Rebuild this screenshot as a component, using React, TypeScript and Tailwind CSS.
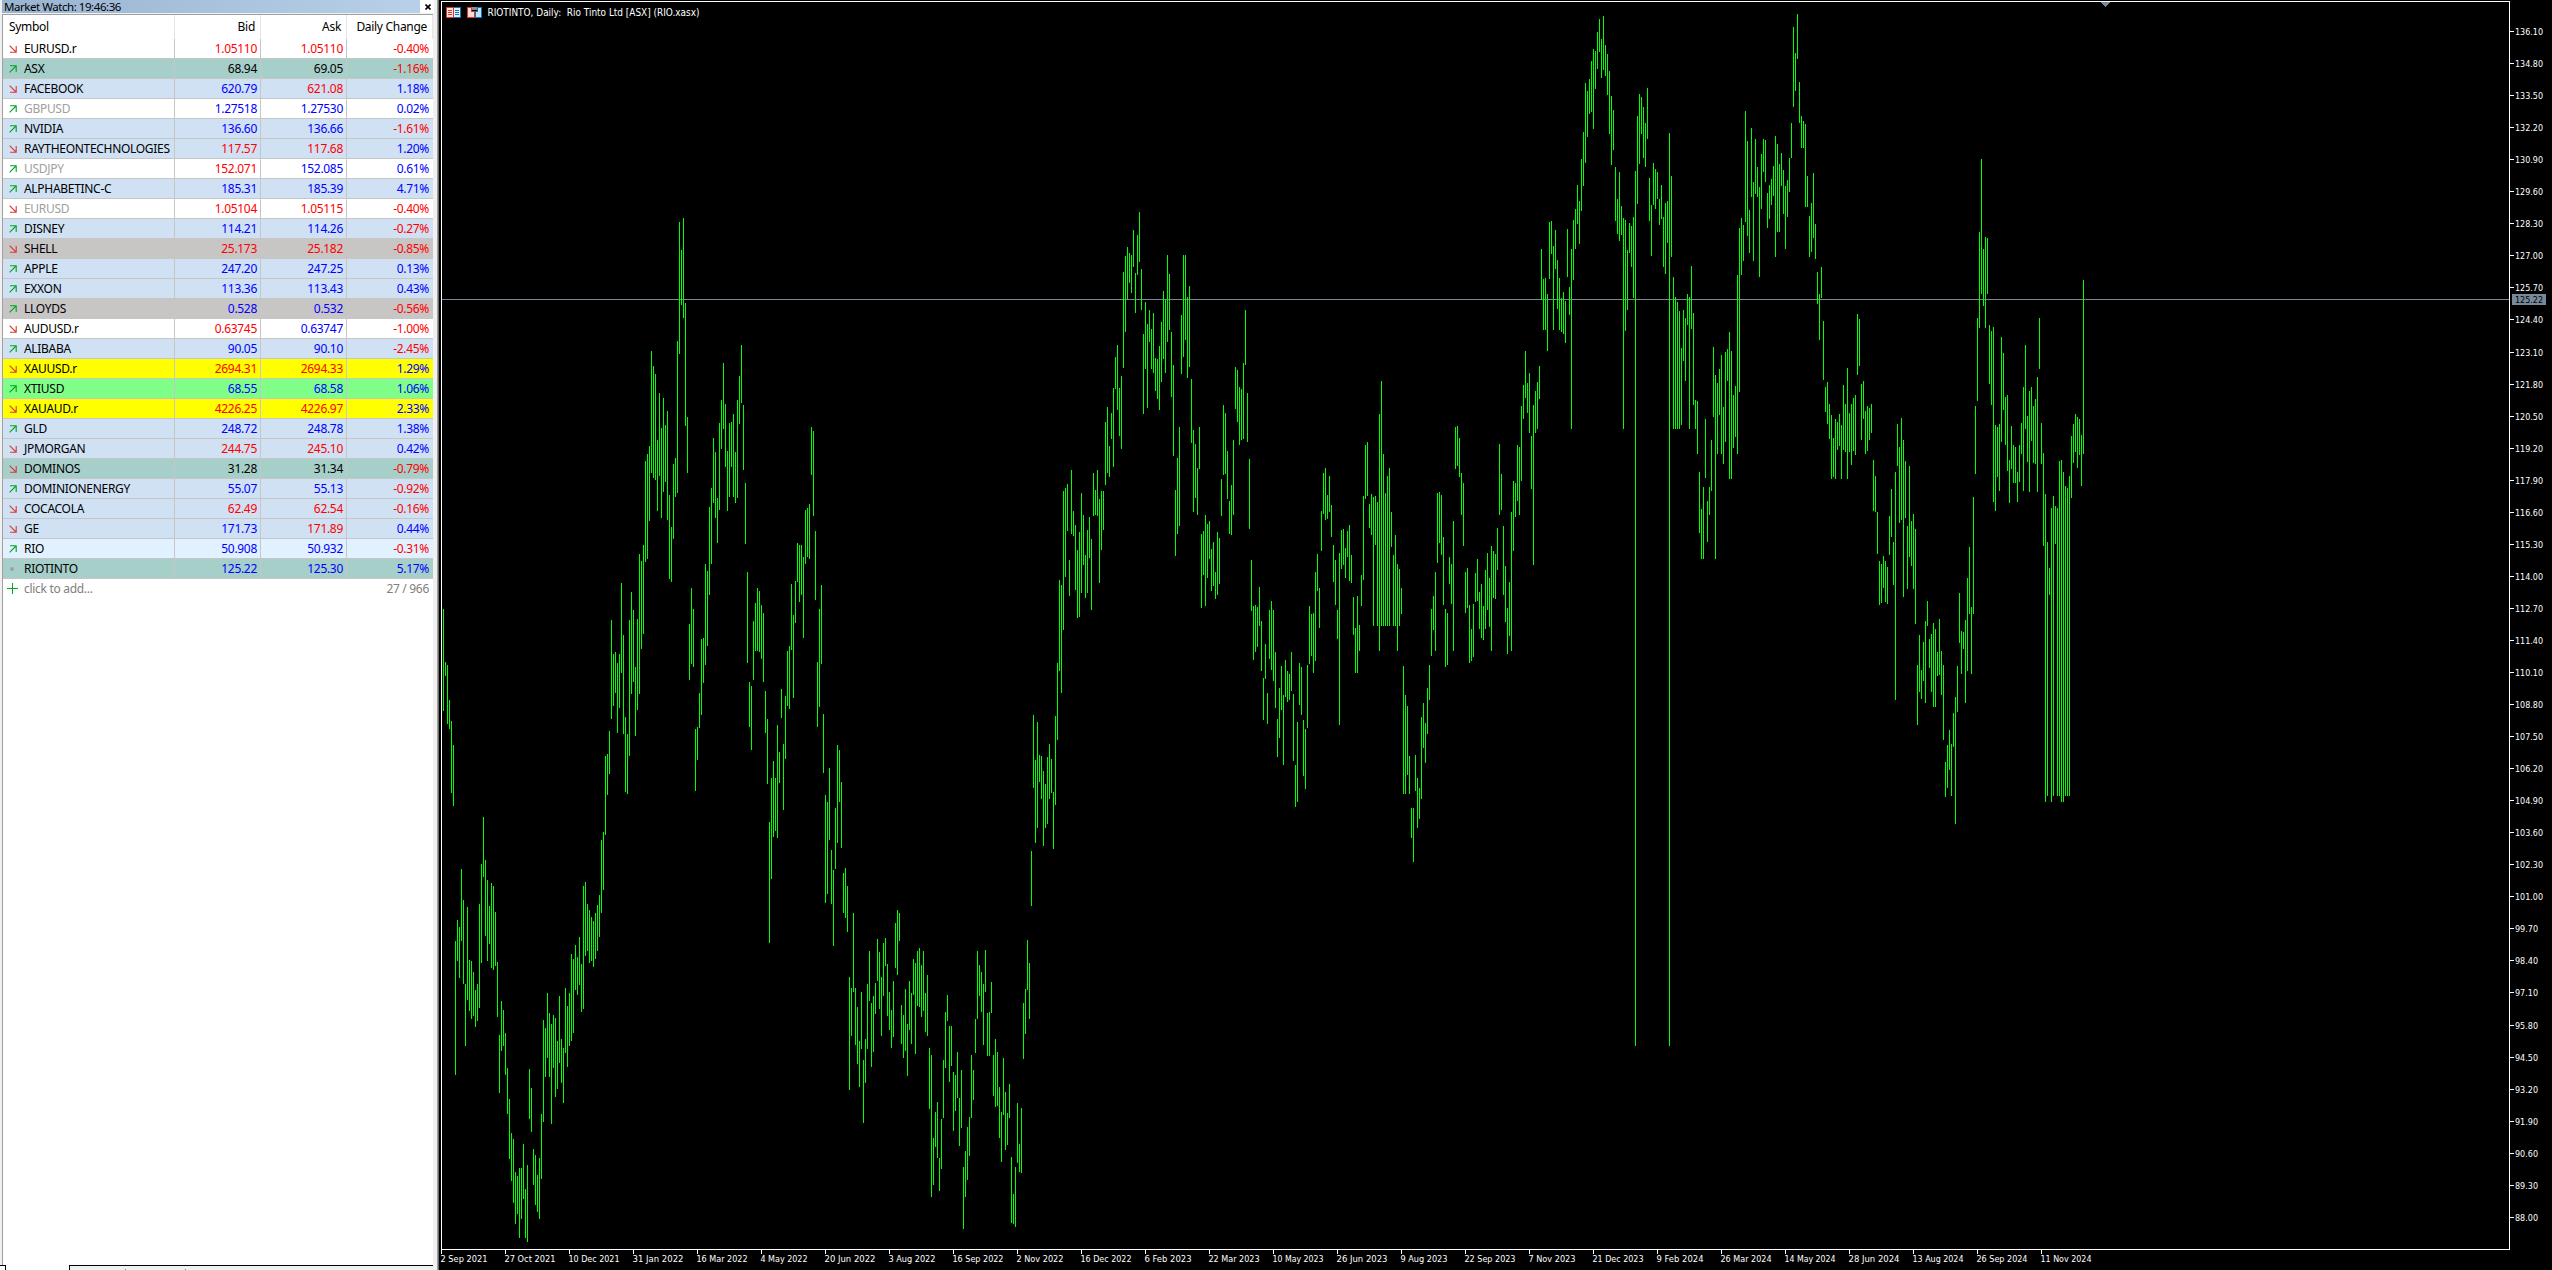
type Quote = {
  symbol: string
  dir: 'up' | 'down' | 'none'
  bid: string
  ask: string
  change: string
  bg: string
  bidColor?: string
  askColor?: string
  muted?: boolean
}

const BLUE = 'text-[#0000ff]'
const RED = 'text-[#ff0000]'
const BLACK = 'text-black'

const SKY = 'bg-[#cfe1f3]'
const TEAL = 'bg-[#a6cfc9]'
const GREY = 'bg-[#c8c5c5]'
const WHITE = 'bg-white'
const YELLOW = 'bg-[#ffff00]'

const QUOTES: Quote[] = [
  { symbol: 'EURUSD.r', dir: 'down', bid: '1.05110', ask: '1.05110', change: '-0.40%', bg: WHITE, bidColor: RED, askColor: RED },
  { symbol: 'ASX', dir: 'up', bid: '68.94', ask: '69.05', change: '-1.16%', bg: TEAL, bidColor: BLACK, askColor: BLACK },
  { symbol: 'FACEBOOK', dir: 'down', bid: '620.79', ask: '621.08', change: '1.18%', bg: SKY, askColor: RED },
  { symbol: 'GBPUSD', dir: 'up', bid: '1.27518', ask: '1.27530', change: '0.02%', bg: WHITE, muted: true },
  { symbol: 'NVIDIA', dir: 'up', bid: '136.60', ask: '136.66', change: '-1.61%', bg: SKY },
  { symbol: 'RAYTHEONTECHNOLOGIES', dir: 'down', bid: '117.57', ask: '117.68', change: '1.20%', bg: SKY, bidColor: RED, askColor: RED },
  { symbol: 'USDJPY', dir: 'up', bid: '152.071', ask: '152.085', change: '0.61%', bg: WHITE, bidColor: RED, muted: true },
  { symbol: 'ALPHABETINC-C', dir: 'up', bid: '185.31', ask: '185.39', change: '4.71%', bg: SKY },
  { symbol: 'EURUSD', dir: 'down', bid: '1.05104', ask: '1.05115', change: '-0.40%', bg: WHITE, bidColor: RED, askColor: RED, muted: true },
  { symbol: 'DISNEY', dir: 'up', bid: '114.21', ask: '114.26', change: '-0.27%', bg: SKY },
  { symbol: 'SHELL', dir: 'down', bid: '25.173', ask: '25.182', change: '-0.85%', bg: GREY, bidColor: RED, askColor: RED },
  { symbol: 'APPLE', dir: 'up', bid: '247.20', ask: '247.25', change: '0.13%', bg: SKY },
  { symbol: 'EXXON', dir: 'up', bid: '113.36', ask: '113.43', change: '0.43%', bg: SKY },
  { symbol: 'LLOYDS', dir: 'up', bid: '0.528', ask: '0.532', change: '-0.56%', bg: GREY },
  { symbol: 'AUDUSD.r', dir: 'down', bid: '0.63745', ask: '0.63747', change: '-1.00%', bg: WHITE, bidColor: RED },
  { symbol: 'ALIBABA', dir: 'up', bid: '90.05', ask: '90.10', change: '-2.45%', bg: SKY },
  { symbol: 'XAUUSD.r', dir: 'down', bid: '2694.31', ask: '2694.33', change: '1.29%', bg: YELLOW, bidColor: RED, askColor: RED },
  { symbol: 'XTIUSD', dir: 'up', bid: '68.55', ask: '68.58', change: '1.06%', bg: 'bg-[#7fff87]' },
  { symbol: 'XAUAUD.r', dir: 'down', bid: '4226.25', ask: '4226.97', change: '2.33%', bg: YELLOW, bidColor: RED, askColor: RED },
  { symbol: 'GLD', dir: 'up', bid: '248.72', ask: '248.78', change: '1.38%', bg: SKY },
  { symbol: 'JPMORGAN', dir: 'down', bid: '244.75', ask: '245.10', change: '0.42%', bg: SKY, bidColor: RED, askColor: RED },
  { symbol: 'DOMINOS', dir: 'down', bid: '31.28', ask: '31.34', change: '-0.79%', bg: TEAL, bidColor: BLACK, askColor: BLACK },
  { symbol: 'DOMINIONENERGY', dir: 'up', bid: '55.07', ask: '55.13', change: '-0.92%', bg: SKY },
  { symbol: 'COCACOLA', dir: 'down', bid: '62.49', ask: '62.54', change: '-0.16%', bg: SKY, bidColor: RED, askColor: RED },
  { symbol: 'GE', dir: 'down', bid: '171.73', ask: '171.89', change: '0.44%', bg: SKY, askColor: RED },
  { symbol: 'RIO', dir: 'up', bid: '50.908', ask: '50.932', change: '-0.31%', bg: 'bg-[#e1f1ff]' },
  { symbol: 'RIOTINTO', dir: 'none', bid: '125.22', ask: '125.30', change: '5.17%', bg: TEAL },
]

// High-low ranges, one bar every 2px. Each run has its own origin and units per pixel.
const RUNS = [
  {
    x: 443,
    y: 600,
    unit: 2.3403,
    bars: `20-260 145-178 153-290 234-302 283-452 339-482 798-1112 749-845 765-885 630-798 702-899 899-1044
      718-936 843-962 845-981 871-974 913-999 899-985 711-955 618-850 508-648 608-786 655-845 716-805
      662-861 669-866 730-857 847-976 1018-1154 938-1055 960-1044 1013-1112 1095-1203 1168-1308 1247-1360
      1261-1411 1339-1460 1348-1437 1329-1493 1329-1449 1273-1402 1378-1493 1322-1502 1098-1215 1142-1245
      1285-1369 1299-1416 1346-1432 1306-1449 1203-1355 983-1222 1002-1116 920-1072 967-1116 992-1226
      971-1095 978-1163 1032-1144 927-1084 1027-1130 1048-1177 908-1060 950-1093 920-1044 828-1032 840-1013
      807-913 835-924 789-901 852-964 669-957 660-833 711-822 725-850 742-845 751-859 733-840 714-822
      690-789 562-733 543-679 365-550 360-456 307-407`,
  },
  {
    x: 611,
    y: 200,
    unit: 2.6133,
    bars: `1098-1356 1186-1322 1181-1288 1210-1393 1186-1328 1001-1236 1137-1396 1351-1547 1396-1552 1098-1453
      1024-1291 1071-1260 1220-1401 1095-1333 925-1291 943-1173 902-1134 682-946 664-938 643-839 395-713
      434-727 455-732 627-813 504-721 596-831 517-763 588-737 551-836 771-990 855-998 690-886 674-776
      368-766 57-402 131-274 47-308 269-591 567-713 1108-1254 1014-1213 1069-1220 1382-1544 1377-1463
      1288-1380 1147-1346 1145-1262 951-1215 970-1166 802-1032 753-951 622-792 659-831 779-896 583-810
      523-651 426-598 533-698 656-813 583-776 580-698 559-776 659-792 523-779 460-585 379-531 536-706
      740-899 972-1210 1260-1377 1270-1437 1100-1254 1053-1179 1014-1179 1022-1181 1058-1200 1079-1260
      1283-1393 1356-1526 1626-1942 1511-1775 1466-1665 1511-1650 1372-1668 1443-1524 1278-1354 1422-1594
      1296-1461 1179-1322 1166-1330 1004-1176 1085-1301 996-1105 896-998 902-1051 902-1032 933-1145 810-951
      805-933 794-938 593-719 604-826 865-1045 1207-1377 1069-1325 1006-1213 1343-1497`,
  },
  {
    x: 825,
    y: 740,
    unit: 3,
    bars: `165-489 186-462 84-300 330-492 390-618 204-387 15-309 30-186 126-324 399-519 384-534 438-576
      711-1050 744-888 519-756 744-915 801-972 903-1041 756-927 960-1149 897-1029 732-927 633-783 789-981
      768-936 729-822 597-723 636-807 711-888 609-768 594-678 672-828 756-870 810-924 723-891 549-684
      510-705 519-603 795-912 825-954 747-933 852-1008 723-870 759-912 657-765 669-942 633-798 624-801
      675-831 633-813 759-876 705-888 924-1107 945-1371 1194-1335 1116-1221 1086-1254 1254-1353 1137-1287
      960-1134 816-984 765-843 858-1026 858-978 996-1173 1005-1113 936-1074 1074-1218 990-1164 1281-1467
      1233-1371 1161-1320 1131-1248 945-1134 990-1080 837-939 633-837 675-768 696-816 732-915 630-756
      819-948 816-948 726-819 945-1068 897-1101 936-1098 1041-1194 1116-1266 954-1125 1056-1230 1119-1215
      1032-1134 1251-1449 1362-1452 1281-1461 1089-1269 1212-1296 1104-1299 789-957 747-882 600-750 669-837
      333-498`,
  },
  {
    x: 1033,
    y: 200,
    unit: 2.6133,
    bars: `1346-1537 1463-1680 1364-1640 1450-1521 1453-1565 1492-1688 1526-1640 1456-1630 1422-1565 1461-1550
      1547-1696 1348-1580 1210-1411 993-1231 1006-1288 760-1124 753-985 742-865 941-1035 706-873 813-878
      849-1019 915-1092 868-1090 766-1027 823-954 928-1040 862-1027 828-936 886-1071 713-826 758-823
      706-826 781-1001 760-915 760-862 580-745 541-713 643-724 557-625 491-698 410-494 379-549 491-617
      460-651 188-439 146-345 123-261 139-217 144-243 78-175 191-295 91-196 31-162 180-287 350-559 267-442
      324-544 287-371 337-442 295-452 413-499 416-520 382-549 319-476 238-416 261-452 144-371 193-340
      345-515 431-669 758-930 674-873 593-852 301-455 144-410 144-366 253-465 225-436 468-635 601-815
      638-779 700-823 593-703 873-1066 865-980 823-1061 847-988 839-938 912-1022 894-1009 972-1043 868-1032
      883-1004 729-826 536-719 557-716 656-781 787-873 745-875 627-823 436-546 444-580 489-640 494-627
      426-625 287-431 504-632 677-860 941-1074 1061-1202 1058-1181 1064-1168 1011-1113 1100-1231 1249-1359
      1160-1252 1288-1369 1071-1200 1048-1228 1071-1257 1181-1328 1356-1456 1275-1406 1218-1333 1294-1477
      1202-1299 1231-1312 1239-1307 1181-1283 1291-1466 1477-1587 1364-1572 1210-1320 1220-1346 1359-1505
      1382-1539 1215-1380 1061-1213 1082-1192 1079-1236 972-1205 925-1022 1014-1119 813-917 713-821 700-836
      771-834 721-815 797-881 902-998 941-1058 1071-1147 923-1372 862-964 860-954 909-988 865-933 849-996
      928-1001 1037-1137 1119-1236 1035-1236 1111-1179 980-1061 774-993 640-781 632-774 794-857 768-875
      776-1113 774-902 789-1113 559-1179 473-1113 664-1113 766-1113 721-1113 700-1113 815-907 928-1113
      875-1113 951-1179 964-1113 1014-1082`,
  },
  {
    x: 1403,
    y: 200,
    unit: 2.3059,
    bars: `1075-1370 1141-1370 1167-1326 1282-1370 1402-1471 1402-1526 1280-1363 1333-1448 1356-1427 1192-1381
      1160-1264 1206-1298 1125-1231 1072-1153 943-1051 913-992 858-1040 676-837 673-791 680-819 777-934
      943-1077 952-1072 823-885 839-932 740-1040 523-620 521-613 549-639 630-726 653-798 858-952 849-941
      934-1068 989-1063 932-1054 860-927 828-925 904-989 885-1010 936-1015 853-989 814-945 872-985 798-1040
      809-918 816-920 756-853 563-726 632-715 752-911 844-973 941-1047 881-1005 719-1040 648-809 653-731
      565-694 570-726 475-648 427-505 348-457 422-491 399-537 544-666 473-842 440-537 420-528 383-459`,
  },
  {
    x: 1541,
    y: 0,
    unit: 3,
    bars: `747-900 837-990 834-990 882-1053 666-837 663-762 738-990 690-807 780-927 834-990 894-996 876-1002
      903-1029 687-831 861-945 747-1287 660-840 627-747 555-672 603-732 477-633 396-558 249-489 273-411
      237-342 183-336 147-387 153-267 96-207 57-156 117-234 48-210 135-228 162-285 213-402 288-495 330-450
      501-663 597-702 516-723 618-705 654-1287 660-993 750-930 669-759 678-801 651-894 513-3138 348-612
      282-492 291-402 321-474 369-501 264-417 534-663 615-768 489-615 507-627 516-597 597-675 555-657
      651-801 609-822 603-729 399-3138 528-771 831-1287 891-1287 906-1287 933-1287 1044-1275 930-1083
      954-1143 882-975 891-1287 798-987 939-1215 1200-1287 1203-1362 1416-1599 1527-1677 1461-1677
      1257-1434 1503-1626 1461-1545 1320-1473 1041-1251 1125-1677 1149-1362 1107-1245 1065-1362 1221-1392
      1056-1326 1047-1143 996-1437 1053-1437 1185-1344 1158-1311 825-1362 684-1176 654-825 675-783 333-666
      423-708 630-759 384-591 546-783 417-582 501-591 561-831 462-627 417-516 420-546 579-684 555-657
      537-615 498-588 408-771 432-696 492-696 459-558 510-642 558-747 540-651 474-576 369-474 81-321
      159-273 42-177 246-369 348-444 363-444 372-621 528-621 648-771 609-756 519-714 672-777 816-912
      882-1020 801-894 963-1140`,
  },
  {
    x: 1825,
    y: 100,
    unit: 2.1189,
    bars: `608-661 598-687 644-718 667-803 716-799 676-803 682-742 665-733 689-803 604-742 644-746 568-803
      663-746 644-773 631-744 625-752 453-583 464-564 602-720 595-676 659-750 648-744 653-720 644-706
      763-871 797-873 873-962 977-1070 983-1066 966-1034 977-1064 990-1068 881-964 824-926 937-1028
      788-1271 687-776 735-896 674-890 720-1053 765-886 903-1036 776-968 892-987 877-1036 909-1110
      1197-1324 1134-1254 1208-1269 1148-1231 1104-1278 1062-1115 1142-1204 1132-1254 1108-1286 1121-1286
      1170-1220 1100-1218 1168-1261 1197-1356 1403-1477 1367-1458 1335-1420 1365-1475 1299-1371 1265-1534
      1199-1297 1045-1151 1125-1216 1127-1163 1102-1278 1013-1210 947-1089 1074-1216 841-1089 648-792
      462-638 280-483 125-411 316-436 290-483 292-411 477-602 489-646 481-852 689-871 693-799 687-828
      502-725 536-657 629-731 625-786 763-854 691-782 731-812 735-812 788-852 731-809 684-750 608-828
      519-697 670-767 617-831 608-723 648-769 634-771 587-831 462-570 684-771 748-945 835-1487 937-1475
      992-1049 865-1487 839-1475 860-941 865-1475 765-1475 763-1487 788-1487 818-1475 822-1475 797-1475
      712-843 687-769 665-746 672-780 676-752 710-818 381-750`,
  },
]

const BARS_PATH = RUNS.map((run) =>
  run.bars
    .split(/\s+/)
    .map((bar, i) => {
      const [high, low] = bar.split('-').map((v) => run.y + Math.round(Number(v) / run.unit))
      return `M${run.x + i * 2} ${high}h1V${low}h-1z`
    })
    .join(''),
).join('')

const DATES = [
  '2 Sep 2021', '27 Oct 2021', '10 Dec 2021', '31 Jan 2022', '16 Mar 2022', '4 May 2022', '20 Jun 2022',
  '3 Aug 2022', '16 Sep 2022', '2 Nov 2022', '16 Dec 2022', '6 Feb 2023', '22 Mar 2023', '10 May 2023',
  '26 Jun 2023', '9 Aug 2023', '22 Sep 2023', '7 Nov 2023', '21 Dec 2023', '9 Feb 2024', '26 Mar 2024',
  '14 May 2024', '28 Jun 2024', '13 Aug 2024', '26 Sep 2024', '11 Nov 2024',
]

const PRICES = Array.from({ length: 38 }, (_, i) => ({
  label: (136.1 - i * 1.3).toFixed(2),
  y: Math.round(31 + i * 32.05),
}))

function Direction({ dir }: { dir: Quote['dir'] }) {
  if (dir === 'none') return <span className="ml-[7px] mr-[10px] size-[4px] rounded-full bg-[#a0a0a0]" />
  return (
    <svg className="ml-[6px] mr-[7px] shrink-0" width="8" height="8" viewBox="0 0 8 8" fill="none" strokeWidth="1.1">
      {dir === 'up' ? (
        <path d="M1 .8h6.2V7M7 1 .6 7.4" stroke="#00a526" />
      ) : (
        <path d="M7.2 1v6.2H1M7 7 .6.6" stroke="#d83a34" />
      )}
    </svg>
  )
}

function Row({ q }: { q: Quote }) {
  const change = q.change.startsWith('-') ? RED : BLUE
  return (
    <div className={`grid h-5 grid-cols-[172px_86px_86px_86px] border-b border-[#c6c6c6] ${q.bg}`}>
      <div className="flex items-center border-r border-[#c6c6c6]">
        <Direction dir={q.dir} />
        <span className={q.muted ? 'text-[#a0a0a0]' : BLACK}>{q.symbol}</span>
      </div>
      <div className={`border-r border-[#c6c6c6] pr-[3px] text-right ${q.bidColor ?? BLUE}`}>{q.bid}</div>
      <div className={`border-r border-[#c6c6c6] pr-[3px] text-right ${q.askColor ?? BLUE}`}>{q.ask}</div>
      <div className={`pr-1 text-right ${change}`}>{q.change}</div>
    </div>
  )
}

function MarketWatch() {
  return (
    <aside className="flex w-[437px] shrink-0 flex-col bg-[#f0f0f0] pl-[2px] font-['Noto_Sans','Open_Sans',sans-serif] text-[12px] leading-[19px] tracking-[-0.3px]">
      <div className="flex h-[13px] w-[432px] bg-linear-to-r from-[#99b4d1] to-[#b9d1ea]">
        <span className="flex-1 pl-[2px] text-[11.5px] leading-[13px] tracking-[-0.45px] text-black">
          Market Watch: 19:46:36
        </span>
        <span className="flex w-[14px] items-center justify-center bg-white pl-[2px]">
          <svg width="6" height="6" viewBox="0 0 6 6" stroke="#000" strokeWidth="1.6">
            <path d="M.5.5l5 5M5.500.5l-5 5" />
          </svg>
        </span>
      </div>
      <div className="mt-px flex h-[1251px] w-[431px] flex-col border-l border-t border-[#a0a0a0] bg-white">
        <div className="grid h-6 grid-cols-[172px_86px_86px_86px] leading-6 text-black">
          <span className="border-r border-[#e5e5e5] pl-[6px]">Symbol</span>
          <span className="border-r border-[#e5e5e5] pr-[5px] text-right">Bid</span>
          <span className="border-r border-[#e5e5e5] pr-[5px] text-right">Ask</span>
          <span className="border-r border-[#e5e5e5] pr-[5px] text-right">Daily Change</span>
        </div>
        {QUOTES.map((q) => (
          <Row key={q.symbol} q={q} />
        ))}
        <div className="flex h-[19px] items-center pr-1 text-[#808080]">
          <svg className="ml-[4px] mr-[6px]" width="11" height="11" viewBox="0 0 11 11" stroke="#00a526">
            <path d="M5.5 0v11M0 5.5h11" />
          </svg>
          <span className="flex-1">click to add...</span>
          <span>27 / 966</span>
        </div>
      </div>
      <div className="-ml-[2px] flex h-[5px] w-[433px] bg-white">
        <div className="w-[6px] border-r border-t border-black" />
        <div className="ml-[63px] flex flex-1 items-end border-l border-t border-black bg-[#f0f0f0]">
          <span className="ml-[55px] h-px w-px bg-[#808080]" />
          <span className="ml-[59px] h-px w-px bg-[#808080]" />
        </div>
      </div>
    </aside>
  )
}

function Chart() {
  return (
    <svg
      className="block font-['DejaVu_Sans_Condensed','DejaVu_Sans',sans-serif] text-[9.5px]"
      width="2115"
      height="1270"
      viewBox="437 0 2115 1270"
      fill="#fff"
    >
      <rect x="437" width="2115" height="1270" fill="#000" />
      <rect x="437" width="1" height="1270" fill="#a0a0a0" />
      <rect x="438" width="1" height="1270" fill="#696969" />
      <g shapeRendering="crispEdges">
        <rect x="441" y="1" width="2069" height="1" />
        <rect x="441" y="1" width="1" height="1253" />
        <rect x="2509" y="1" width="1" height="1249" />
        <rect x="441" y="1249" width="2069" height="1" />
        <rect x="442" y="299" width="2067" height="1" fill="#778899" />
        <path d="M2101 2h9l-4.500 5z" fill="#778899" />
        <path d={BARS_PATH} fill="#00ff00" />
      </g>

      {/* depth of market */}
      <g shapeRendering="crispEdges">
        <rect x="446" y="7" width="8" height="11" fill="#d9362f" />
        <rect x="447" y="8" width="6" height="9" fill="#ffe3e1" />
        <rect x="454" y="7" width="7" height="11" fill="#1b6fae" />
        <rect x="454" y="8" width="6" height="9" fill="#dff1ff" />
        <path d="M448 10h4v1h-4zM448 12h4v1h-4zM448 14h4v1h-4z" fill="#d9362f" />
        <path d="M455 10h4v1h-4zM455 12h4v1h-4zM455 14h4v1h-4z" fill="#1b6fae" />
      </g>
      {/* one click trading */}
      <g shapeRendering="crispEdges">
        <path d="M467 7h5v4h3v7h-8z" fill="#d9362f" />
        <path d="M468 8h3v4h3v5h-6z" fill="#ffd9d6" />
        <path d="M477 7h5v11h-7v-7h2z" fill="#1b6fae" />
        <path d="M478 8h3v9h-5v-5h2z" fill="#bfe3ff" />
        <rect x="472" y="7" width="5" height="3" fill="#8c8c8c" />
      </g>
      <text
        className="whitespace-pre"
        x="487.5"
        y="16"
        fontSize="10.5"
        textLength="212"
        lengthAdjust="spacingAndGlyphs"
      >
        {'RIOTINTO, Daily:  Rio Tinto Ltd [ASX] (RIO.xasx)'}
      </text>

      {PRICES.map(({ label, y }) => (
        <g key={label}>
          <rect x="2510" y={y} width="4" height="1" />
          <text x="2515" y={y + 4} textLength={label.length > 5 ? 28 : 23} lengthAdjust="spacingAndGlyphs">
            {label}
          </text>
        </g>
      ))}
      <rect x="2512" y="294" width="34" height="11" fill="#778899" />
      <text x="2515" y="303" fill="#000" textLength="28" lengthAdjust="spacingAndGlyphs">
        125.22
      </text>

      {DATES.map((date, i) => (
        <g key={date}>
          <rect x={441 + i * 64} y="1250" width="1" height="4" />
          <text x={440.5 + i * 64} y="1262" textLength={date.length > 10 ? 51 : 47} lengthAdjust="spacingAndGlyphs">
            {date}
          </text>
        </g>
      ))}
    </svg>
  )
}

export default function App() {
  return (
    <main className="flex h-[1270px] w-[2552px] overflow-hidden bg-black">
      <MarketWatch />
      <Chart />
    </main>
  )
}
